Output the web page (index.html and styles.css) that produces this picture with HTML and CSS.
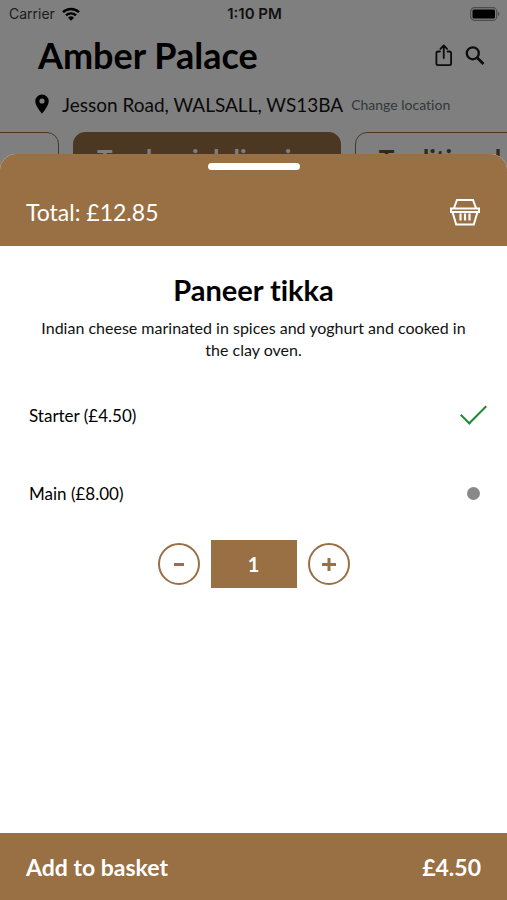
FILE: index.html
```html
<!DOCTYPE html>
<html lang="en">
<head>
<meta charset="utf-8">
<meta name="viewport" content="width=device-width, initial-scale=1">
<title>Amber Palace</title>
<link rel="stylesheet" href="styles.css">
</head>
<body>
<div class="screen">
  <div class="status">
    <span class="carrier">Carrier
      <svg width="18" height="14" viewBox="0 0 18 14" aria-hidden="true"><g fill="none" stroke="#000" stroke-width="2.4"><path d="M1 5.2a11.5 11.5 0 0 1 16 0"/><path d="M4 8.4a7.2 7.2 0 0 1 10 0"/></g><path d="M9 13.8 6 10.8a4.3 4.3 0 0 1 6 0z"/></svg>
    </span>
    <span class="time">1:10 PM</span>
    <svg class="battery" width="30" height="14" viewBox="0 0 30 14" aria-hidden="true"><rect x=".7" y=".7" width="26" height="12.6" rx="3.8" fill="none" stroke="#4d4d4d" stroke-width="1.2"/><rect x="2.500" y="2.500" width="22.500" height="9" rx="1.500"/><path d="M28 4.800q3 2.200 0 4.400z" fill="#4d4d4d"/></svg>
  </div>
  <header class="header">
    <h1 class="name">Amber Palace</h1>
    <button class="icon" aria-label="Share"><svg width="18" height="24" viewBox="0 0 18 24"><g fill="none" stroke="#0c0c0c" stroke-width="1.8" stroke-linecap="round" stroke-linejoin="round"><path d="M5 7.500H3a1.600 1.600 0 0 0-1.600 1.600v10.500A1.600 1.600 0 0 0 3 21.200h11.500a1.600 1.600 0 0 0 1.600-1.600V9.100a1.600 1.600 0 0 0-1.600-1.600h-2M8.750 14V1.800M5.400 4.800 8.750 1.500l3.350 3.300"/></g></svg></button>
    <button class="icon" aria-label="Search"><svg width="20" height="20" viewBox="0 0 20 20"><g fill="none" stroke="#0c0c0c"><circle cx="7.800" cy="7.300" r="6" stroke-width="2.300"/><path d="m12.200 11.700 6.300 6.300" stroke-width="2.700"/></g></svg></button>
  </header>
  <div class="place">
    <svg width="14" height="20" viewBox="0 0 14 20" aria-hidden="true"><path fill-rule="evenodd" d="M7 .5A6.700 6.700 0 0 0 .3 7.200C.3 12 7 19.500 7 19.500s6.700-7.500 6.700-12.300A6.700 6.700 0 0 0 7 .5zm0 3.900a2.600 2.600 0 1 1 0 5.200 2.600 2.600 0 0 1 0-5.200z"/></svg>
    <span class="address">Jesson Road, WALSALL, WS13BA</span>
    <a class="change" href="#">Change location</a>
  </div>
  <nav class="tabs">
    <a class="tab" href="#" aria-label="Previous category"></a>
    <a class="tab tab-active" href="#">Tandoori delicacies</a>
    <a class="tab" href="#">Traditional</a>
  </nav>

  <main class="sheet">
    <div class="total">
      <span class="handle"></span>
      <div class="bar">
        <span>Total: £12.85</span>
        <svg width="32" height="28" viewBox="0 0 32 28" aria-hidden="true"><g fill="none" stroke="#fff" stroke-width="2"><path d="M5 10 8 2h16l3 8M2 10.500h28v3.500H2zM3.500 14l3.700 12.500h17.600L28.500 14"/><path d="M11.500 15.500v7M16 15.500v7M20.500 15.500v7" stroke-width="2.200"/></g></svg>
      </div>
    </div>
    <section class="dish">
      <h2 class="dish-name">Paneer tikka</h2>
      <p class="about">Indian cheese marinated in spices and yoghurt and cooked in the clay oven.</p>
      <label class="option">Starter (£4.50)<input type="radio" name="size" checked></label>
      <label class="option">Main (£8.00)<input type="radio" name="size"></label>
      <div class="quantity">
        <button class="step" aria-label="Decrease"><svg width="14" height="14" viewBox="0 0 14 14"><path d="M2 7.500h10" stroke="#996f44" stroke-width="3"/></svg></button>
        <output class="count">1</output>
        <button class="step" aria-label="Increase"><svg width="14" height="14" viewBox="0 0 14 14"><path d="M0 7.500h14M7 1v13" stroke="#996f44" stroke-width="3"/></svg></button>
      </div>
    </section>
    <button class="add"><span>Add to basket</span><span>£4.50</span></button>
  </main>
</div>
</body>
</html>
```
FILE: styles.css
```css
:root { --brown: #996f44; }
* { box-sizing: border-box; }
body { margin: 0; font-family: Lato, sans-serif; font-variant-ligatures: none; color: #000; }
button { font: inherit; color: inherit; background: none; border: 0; padding: 0; }
svg { display: block; }
a { text-decoration: none; color: inherit; }

.screen { position: relative; min-height: 100vh; background: #7f7f7f; overflow: hidden; }

.status {
  display: grid; grid-template-columns: 1fr auto 1fr; align-items: center;
  height: 28px; padding: 0 7px 0 9px;
  font: 14px/20px Inter, sans-serif;
}
.carrier { display: flex; align-items: center; gap: 7px; color: #1c1c1c; }
.time { font-size: 15px; font-weight: 600; color: #111; }
.battery { justify-self: end; }

.header { display: flex; align-items: center; gap: 12px; height: 56px; padding: 0 22px 0 38px; }
.name { flex: 1; margin: 0 0 2px; font-size: 36px; line-height: 40px; font-weight: 700; }

.place { display: flex; align-items: center; height: 40px; padding: 0 35px; white-space: nowrap; }
.address { margin-left: 13px; font-size: 19px; color: #0a0a0a; }
.change { margin-left: 8px; font-size: 14px; color: #30393b; }

.tabs { display: flex; gap: 14px; margin: 8px 0 0 -208px; }
.tab {
  flex: none; min-width: 267px; height: 54px; padding: 10px 23px;
  border: 1px solid #4c3822; border-radius: 12px;
  font-size: 26px; line-height: 32px; font-weight: 700; color: #30271d; white-space: nowrap;
}
.tab-active { background: #4c3822; color: #7f7f7f; }

.sheet {
  position: absolute; inset: 154px 0 0;
  display: flex; flex-direction: column;
  background: #fff; border-radius: 16px 16px 0 0; overflow: hidden;
}
.total { height: 92px; padding-top: 9px; background: var(--brown); color: #fff; }
.handle { display: block; width: 92px; height: 7px; margin: 0 auto; border-radius: 4px; background: #fff; }
.bar { display: flex; align-items: center; justify-content: space-between; margin-top: 26px; padding: 0 26px; font-size: 23px; line-height: 32px; }

.dish { flex: 1; padding: 26px 20px 0; }
.dish-name { margin: 0; font-size: 29px; line-height: 36px; font-weight: 700; text-align: center; }
.about { margin: 9px 0 0; padding: 0 12px; font-size: 16px; line-height: 22px; text-align: center; color: #111; }
.option { display: flex; align-items: center; justify-content: space-between; height: 78px; padding-left: 9px; font-size: 17px; }
.about + .option { margin-top: 15px; }
.option input { appearance: none; display: grid; place-items: center; width: 28px; height: 28px; margin: 0; }
.option input::before { content: ""; width: 13px; height: 13px; border-radius: 50%; background: #888; }
.option input:checked::before {
  width: 23px; height: 11px; border: solid #1e8a32; border-width: 0 0 2px 2px; border-radius: 0;
  background: none; transform: rotate(-45deg) translate(3px, -3px);
}

.quantity { display: flex; align-items: center; justify-content: center; gap: 11px; margin-top: 8px; }
.step { display: grid; place-items: center; width: 42px; height: 42px; border: 2px solid var(--brown); border-radius: 50%; }
.count { width: 86px; background: var(--brown); color: #fff; font-size: 20px; line-height: 48px; font-weight: 700; text-align: center; }

.add {
  display: flex; align-items: center; justify-content: space-between;
  height: 67px; padding: 0 26px; background: var(--brown); color: #fff;
  font-size: 23px; font-weight: 700;
}
```
